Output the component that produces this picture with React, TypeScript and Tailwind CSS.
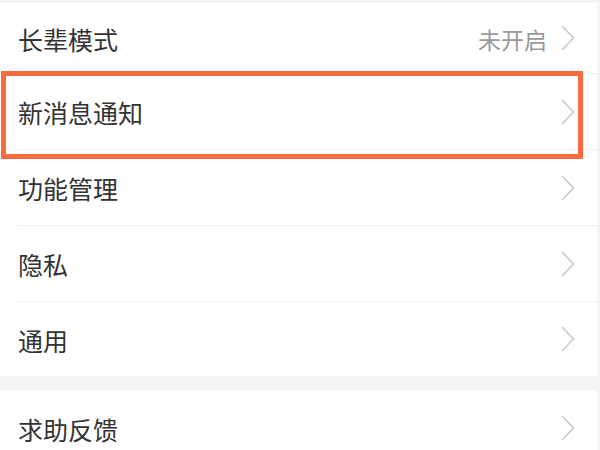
const rows = [
  { label: "长辈模式", value: "未开启", h: "h-[71px]" },
  { label: "新消息通知", h: "h-[76px]" },
  { label: "功能管理", h: "h-[76px]" },
  { label: "隐私", h: "h-[76px]" },
  { label: "通用", h: "h-[74px]", last: true },
];

function Chevron() {
  return (
    <svg width="14" height="26" viewBox="0 0 14 26" fill="none" className="shrink-0">
      <path d="M1.5 1.5 L12.5 13 L1.5 24.5" stroke="#c9c9c9" strokeWidth="1.6" strokeLinejoin="round" strokeLinecap="round" />
    </svg>
  );
}

function Row({ label, value, h, last }: { label: string; value?: string; h: string; last?: boolean }) {
  return (
    <div className="bg-white pl-[18px]">
      <div className={`flex items-center justify-between pr-[22px] ${h} ${last ? "" : "border-b border-[#efefef]"}`}>
        <span className="text-[25px] text-[#333333] pt-[3px]">{label}</span>
        <div className="flex items-center gap-[14px]">
          {value && <span className="text-[23px] text-[#9a9a9a] pt-[2px]">{value}</span>}
          <Chevron />
        </div>
      </div>
    </div>
  );
}

export default function App() {
  return (
    <div
      className="relative h-[450px] w-[600px] overflow-hidden bg-[#f4f4f4]"
      style={{ fontFamily: '"Noto Sans CJK SC", "Noto Sans", sans-serif' }}
    >
      <div className="w-[597px]">
        <div className="h-[3px]" />
        {rows.map((r) => (
          <Row key={r.label} {...r} />
        ))}
        <div className="h-[14px]" />
        <Row label="求助反馈" h="h-[76px]" last />
      </div>
      <div className="absolute left-[1px] top-[71px] h-[88px] w-[582px] border-[5px] border-[#f76c3d]" />
    </div>
  );
}
